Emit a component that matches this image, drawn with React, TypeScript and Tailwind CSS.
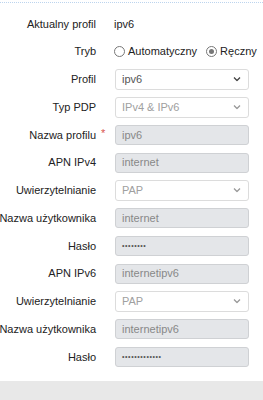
import React from 'react';

function Chevron({ dark }: { dark?: boolean }) {
  return (
    <svg width="8" height="5" viewBox="0 0 8 5" className="absolute right-[7px] top-1/2 -translate-y-1/2">
      <path d="M1 1l3 3 3-3" fill="none" stroke={dark ? '#444' : '#999'} strokeWidth="1.3" />
    </svg>
  );
}

function Row({ label, required, children }: { label: string; required?: boolean; children: React.ReactNode }) {
  return (
    <div className="flex items-center h-[27.75px]">
      <div className="relative w-[96px] shrink-0 text-right whitespace-nowrap flex justify-end">
        <span>{label}</span>
        {required && <span className="absolute left-[101px] -top-[2px] text-[#d9534f]">*</span>}
      </div>
      <div className="ml-[19px] w-[134px] shrink-0">{children}</div>
    </div>
  );
}

function Select({ value, dark }: { value: string; dark?: boolean }) {
  return (
    <div className={`relative h-[21px] rounded-[3px] border border-[#dcdcdc] bg-white pl-[6px] flex items-center ${dark ? 'text-[#555]' : 'text-[#a0a0a0]'}`}>
      {value}
      <Chevron dark={dark} />
    </div>
  );
}

function Input({ value, dots }: { value: string; dots?: boolean }) {
  return (
    <div className="h-[20px] rounded-[3px] border border-[#cfd1d4] bg-[#e4e6e9] pl-[6px] flex items-center text-[#888]">
      {dots ? <span className="text-[7px] tracking-[0.6px] text-[#555]">{value}</span> : value}
    </div>
  );
}

function Radio({ checked }: { checked?: boolean }) {
  return (
    <span className="inline-flex shrink-0 w-[11px] h-[11px] rounded-full border border-[#777] items-center justify-center bg-white mr-[3px]">
      {checked && <span className="w-[5px] h-[5px] rounded-full bg-[#777]" />}
    </span>
  );
}

export default function App() {
  return (
    <div className="w-[263px] h-[400px] bg-white overflow-hidden flex flex-col text-[11px] text-[#222]" style={{ fontFamily: '"Liberation Sans", Arial, sans-serif' }}>
      <div className="mt-[2px] border-t border-dotted border-[#bcd4ee]" />
      <div className="pt-[7px] flex flex-col">
        <Row label="Aktualny profil">
          <span className="-ml-[1px]">ipv6</span>
        </Row>
        <Row label="Tryb">
          <div className="flex items-center -ml-[1px] whitespace-nowrap">
            <Radio />
            <span>Automatyczny</span>
            <span className="ml-[9px] flex items-center">
              <Radio checked />
              <span>Ręczny</span>
            </span>
          </div>
        </Row>
        <Row label="Profil">
          <Select value="ipv6" dark />
        </Row>
        <Row label="Typ PDP">
          <Select value="IPv4 & IPv6" />
        </Row>
        <Row label="Nazwa profilu" required>
          <Input value="ipv6" />
        </Row>
        <Row label="APN IPv4">
          <Input value="internet" />
        </Row>
        <Row label="Uwierzytelnianie">
          <Select value="PAP" />
        </Row>
        <Row label="Nazwa użytkownika">
          <Input value="internet" />
        </Row>
        <Row label="Hasło">
          <Input value="••••••••" dots />
        </Row>
        <Row label="APN IPv6">
          <Input value="internetipv6" />
        </Row>
        <Row label="Uwierzytelnianie">
          <Select value="PAP" />
        </Row>
        <Row label="Nazwa użytkownika">
          <Input value="internetipv6" />
        </Row>
        <Row label="Hasło">
          <Input value="•••••••••••••" dots />
        </Row>
      </div>
      <div className="mt-auto h-[19px] bg-[#e8e8e8]" />
    </div>
  );
}
